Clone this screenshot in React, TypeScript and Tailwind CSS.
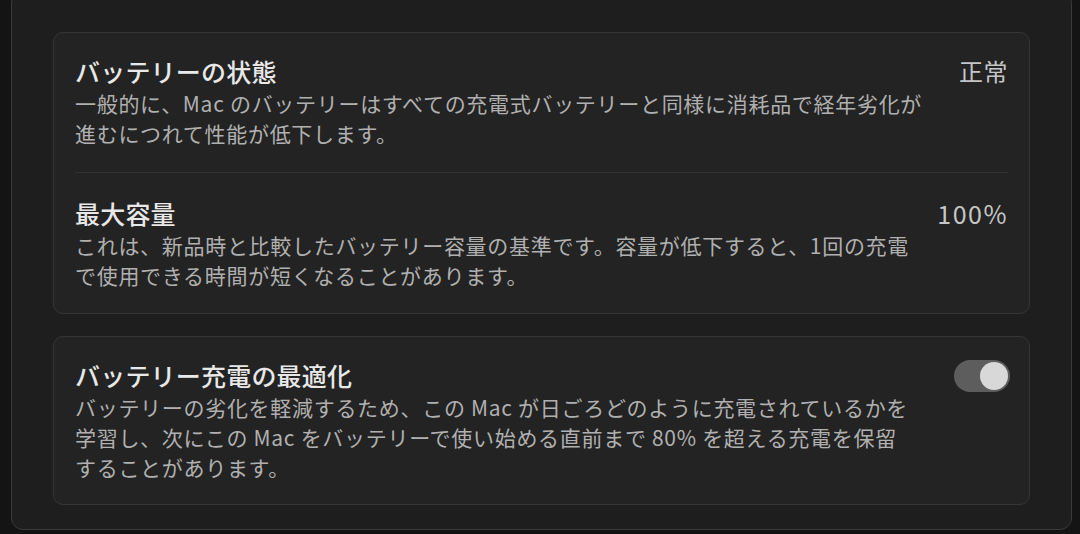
import React from "react";

const font = { fontFamily: '"Noto Sans CJK JP", "Noto Sans", sans-serif' };

function Toggle() {
  return (
    <div className="w-[56px] h-[32px] mt-[1px] mr-[-2px] rounded-full bg-[#5d5d5d] flex items-center justify-end px-[2px] shrink-0">
      <div className="w-[28px] h-[28px] rounded-full bg-[#d8d8d8]" />
    </div>
  );
}

function Row({
  title,
  lines,
  right,
}: {
  title: string;
  lines: string[];
  right: React.ReactNode;
}) {
  return (
    <div className="flex items-start justify-between gap-4">
      <div className="flex flex-col">
        <div className="text-[25px] leading-[32px] font-medium text-[#e8e8e8] tracking-[0.2px]">
          {title}
        </div>
        <div className="text-[21px] leading-[30px] mt-[1px] text-[#b0b0b0] font-normal tracking-[0.7px]">
          {lines.map((l, i) => (
            <div key={i} className="whitespace-nowrap">
              {l}
            </div>
          ))}
        </div>
      </div>
      {right}
    </div>
  );
}

export default function App() {
  return (
    <div
      className="w-[1080px] h-[534px] bg-[#141414] flex overflow-hidden pl-[11px] pr-[8px] pb-[4px]"
      style={font}
    >
      <div className="flex-1 mt-[-9px] rounded-[12px] border border-[#3a3a3a] bg-[#1e1e1e] px-[41px] pt-[40px] flex flex-col gap-[22px]">
        <div className="rounded-[10px] border border-[#363636] bg-[#232323] px-[21px] pt-[22px] pb-[23px] flex flex-col">
          <Row
            title="バッテリーの状態"
            lines={[
              "一般的に、Mac のバッテリーはすべての充電式バッテリーと同様に消耗品で経年劣化が",
              "進むにつれて性能が低下します。",
            ]}
            right={
              <div className="text-[24px] leading-[32px] text-[#c6c6c6] font-normal tracking-[0.5px]">正常</div>
            }
          />
          <div className="h-px bg-[#333333] mt-[24px] mb-[24px]" />
          <Row
            title="最大容量"
            lines={[
              "これは、新品時と比較したバッテリー容量の基準です。容量が低下すると、1回の充電",
              "で使用できる時間が短くなることがあります。",
            ]}
            right={
              <div className="text-[25px] leading-[32px] text-[#c6c6c6] font-normal tracking-[1.5px]">100%</div>
            }
          />
        </div>
        <div className="rounded-[10px] border border-[#363636] bg-[#232323] px-[21px] pt-[22px] pb-[22px] flex flex-col">
          <Row
            title="バッテリー充電の最適化"
            lines={[
              "バッテリーの劣化を軽減するため、この Mac が日ごろどのように充電されているかを",
              "学習し、次にこの Mac をバッテリーで使い始める直前まで 80% を超える充電を保留",
              "することがあります。",
            ]}
            right={<Toggle />}
          />
        </div>
      </div>
    </div>
  );
}
